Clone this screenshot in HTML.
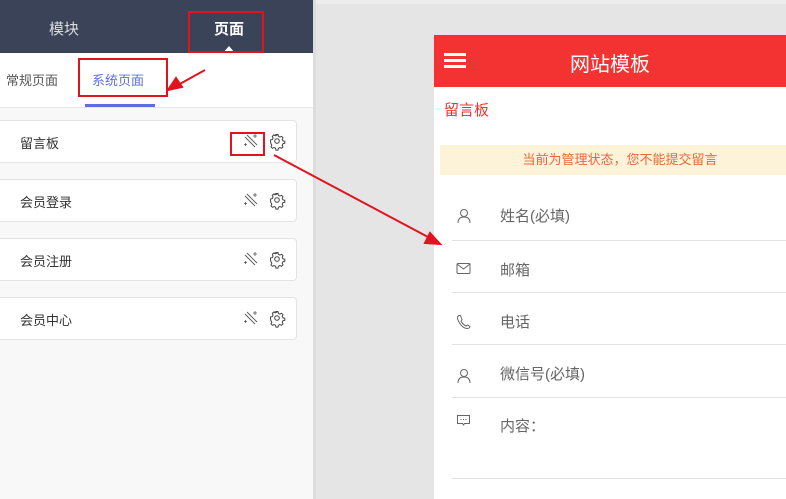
<!DOCTYPE html>
<html><head><meta charset="utf-8"><style>
*{margin:0;padding:0;box-sizing:border-box}
body{width:786px;height:499px;overflow:hidden;background:#e5e5e5;font-family:"Liberation Sans","Noto Sans CJK SC",sans-serif;position:relative}
.abs{position:absolute}
svg{overflow:visible}
.left{left:0;top:0;width:313px;height:499px;background:#f8f8f8}
.hdr{left:0;top:0;width:313px;height:53px;background:#3a4358;color:#fff;font-size:15px}
.tabs{left:0;top:53px;width:313px;height:55px;background:#fff;border-bottom:1px solid #e6e6e6;font-size:13px}
.card{left:-8px;width:305px;height:43px;background:#fff;border:1px solid #e3e3e3;border-radius:4px;font-size:13px;color:#333}
.card span{position:absolute;left:27px;top:12px}
.card svg{position:absolute;top:13px}
.phone{left:434px;top:35px;width:352px;height:464px;background:#fff}
.row{position:absolute;left:18px;right:0;border-bottom:1px solid #e3e3e3;color:#666;font-size:15px}
.row span{position:absolute;left:48px}
.row svg{position:absolute;left:4px}
</style></head><body>
<div class="abs" style="left:313px;top:0;width:473px;height:4px;background:#ededed"></div>
<div class="abs left"></div>
<div class="abs" style="left:313px;top:0;width:3px;height:499px;background:#ddd"></div>
<div class="abs hdr">
<div class="abs" style="left:49px;top:18px;color:#ddd">模块</div>
<div class="abs" style="left:214px;top:18px;font-weight:bold">页面</div>
<div class="abs" style="left:223px;top:46px;width:0;height:0;border-left:6px solid transparent;border-right:6px solid transparent;border-bottom:7px solid #fff"></div>
</div>
<div class="abs tabs">
<div class="abs" style="left:6px;top:17px;color:#555">常规页面</div>
<div class="abs" style="left:92px;top:17px;color:#5a6fdc">系统页面</div>
<div class="abs" style="left:85px;top:51px;width:70px;height:3px;background:#5a6fdc"></div>
</div>
<svg width="0" height="0" style="position:absolute"><defs>
<g id="wand" fill="none" stroke="#555" stroke-width="0.9"><path d="M1 3L11 13M3 1L13 11"/><path d="M11 0v4M9 2h4M1.5 9v3M0 10.5h3" stroke-width="0.8"/></g>
<g id="gear" fill="none" stroke="#444" stroke-width="1"><path d="M6 0.5h2l.4 1.8 1.5.8 1.7-.8 1.4 1.4-.8 1.7.8 1.5 1.8.4v2l-1.8.4-.8 1.5.8 1.7-1.4 1.4-1.7-.8-1.5.8-.4 1.8H6l-.4-1.8-1.5-.8-1.7.8-1.4-1.4.8-1.7-.8-1.5L.5 8V6l1.8-.4.8-1.5-.8-1.7 1.4-1.4 1.7.8 1.5-.8z"/><circle cx="7" cy="7" r="2.3"/></g>
</defs></svg>
<div class="abs card" style="top:120px"><span>留言板</span><svg style="left:251px" width="14" height="14"><use href="#wand"/></svg><svg style="left:277px" width="15" height="15"><use href="#gear"/></svg></div>
<div class="abs card" style="top:179px"><span>会员登录</span><svg style="left:251px" width="14" height="14"><use href="#wand"/></svg><svg style="left:277px" width="15" height="15"><use href="#gear"/></svg></div>
<div class="abs card" style="top:238px"><span>会员注册</span><svg style="left:251px" width="14" height="14"><use href="#wand"/></svg><svg style="left:277px" width="15" height="15"><use href="#gear"/></svg></div>
<div class="abs card" style="top:297px"><span>会员中心</span><svg style="left:251px" width="14" height="14"><use href="#wand"/></svg><svg style="left:277px" width="15" height="15"><use href="#gear"/></svg></div>

<div class="abs phone">
<div class="abs" style="left:0;top:0;width:352px;height:52px;background:#f33232"></div>
<div class="abs" style="left:10px;top:18px;width:22px;height:3px;background:#fff;box-shadow:0 6px 0 #fff,0 12px 0 #fff"></div>
<div class="abs" style="left:0;width:352px;top:13px;text-align:center;color:#fff;font-size:20px">网站模板</div>
<div class="abs" style="left:10px;top:64px;color:#f33232;font-size:15px">留言板</div>
<div class="abs" style="left:6px;top:110px;width:346px;height:30px;background:#fdf3d8;color:#e8683a;font-size:13px;text-align:center;line-height:30px;padding-left:14px">当前为管理状态，您不能提交留言</div>
<div class="row" style="top:160px;height:46px"><svg style="top:13px" width="16" height="16" fill="none" stroke="#666"><circle cx="8" cy="5" r="3.5"/><path d="M2 15c0-5 3-6 6-6s6 1 6 6"/></svg><span style="top:10px">姓名(必填)</span></div>
<div class="row" style="top:206px;height:52px"><svg style="top:21px" width="16" height="14" fill="none" stroke="#666"><rect x="1" y="1.5" width="13" height="10" rx="1"/><path d="M1 2l6.5 5 6.5-5"/></svg><span style="top:18px">邮箱</span></div>
<div class="row" style="top:258px;height:52px"><svg style="top:21px" width="16" height="16" fill="none" stroke="#666"><path d="M3 1.5c-2 1-2 3 0 6.5s5 6.5 8 6.5c2 0 3-1 3-2l-2.5-1.5-1.5 1c-2-1-4-3-5-5l1-1.5L4.5 1.5z"/></svg><span style="top:18px">电话</span></div>
<div class="row" style="top:310px;height:53px"><svg style="top:23px" width="16" height="16" fill="none" stroke="#666"><circle cx="8" cy="5" r="3.5"/><path d="M2 15c0-5 3-6 6-6s6 1 6 6"/></svg><span style="top:18px">微信号(必填)</span></div>
<div class="row" style="top:363px;height:81px"><svg style="top:16px" width="16" height="14" fill="none" stroke="#666"><path d="M1.5 1.5h12v8h-5l-1 1.5-1-1.5h-5z"/><path d="M4.5 5.5h1M7 5.5h1M9.5 5.5h1"/></svg><span style="top:17px">内容：</span></div>
</div>

<svg class="abs" style="left:0;top:0" width="786" height="499" fill="none" stroke="#e0141e" stroke-width="2">
<rect x="189" y="12" width="74" height="40"/>
<rect x="79" y="59" width="88" height="37"/>
<rect x="231" y="133" width="33" height="22"/>
<path d="M205 70L178 85"/><path d="M168 90l8-12 6 9z" fill="#e0141e"/>
<path d="M274 155L428 237"/><path d="M440 244l-15-1 5-10z" fill="#e0141e"/>
</svg>
</body></html>
